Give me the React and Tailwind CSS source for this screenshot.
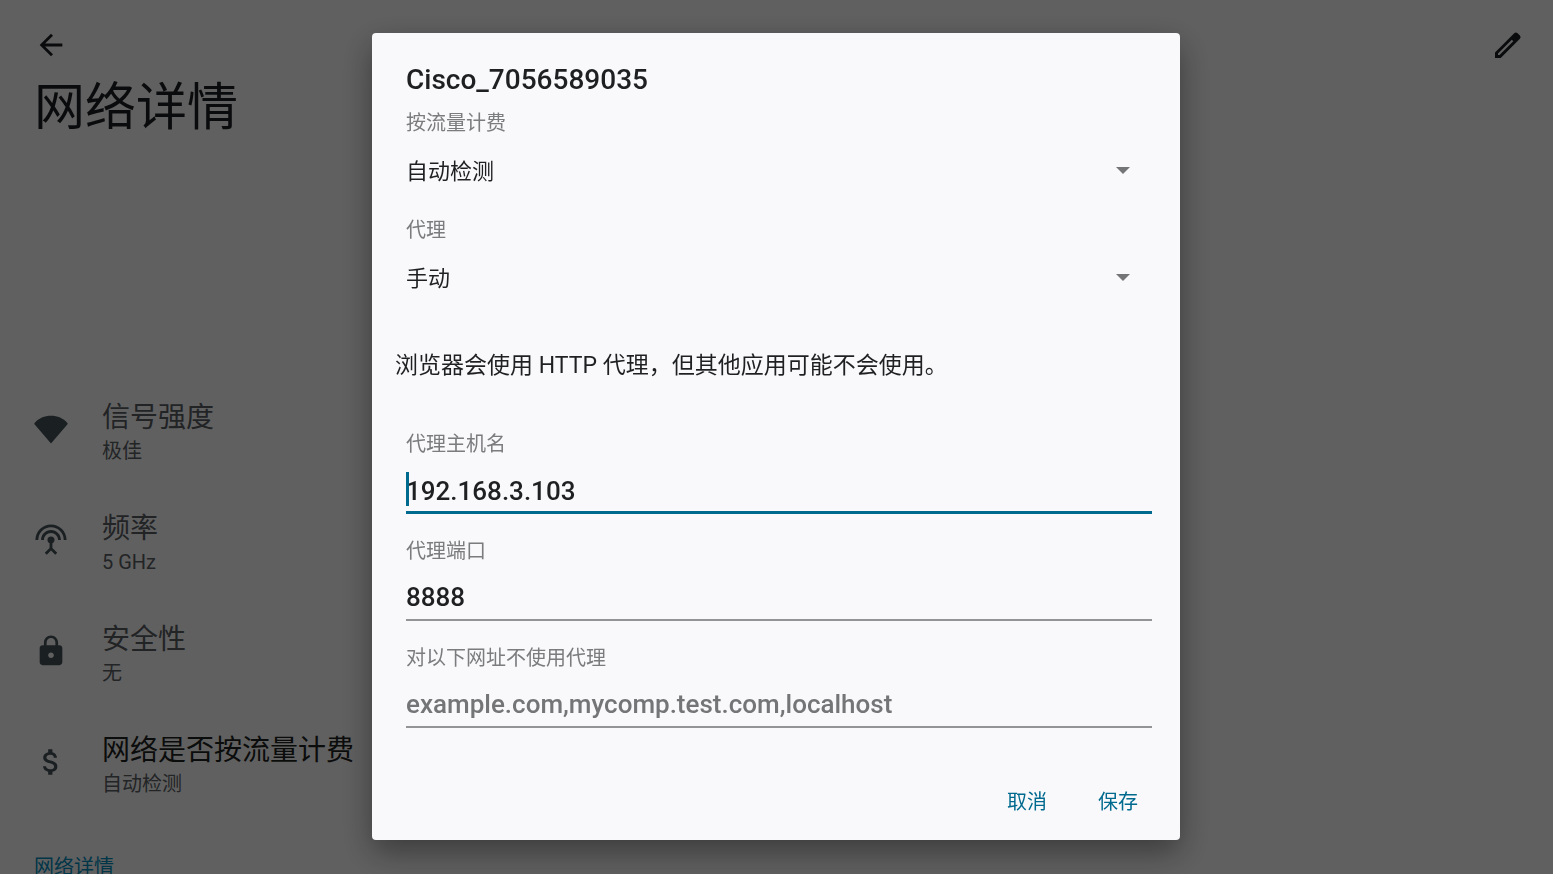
import { MdArrowBack, MdAttachMoney, MdLock, MdSettingsInputAntenna } from "react-icons/md";

const details = [
  { title: "信号强度", summary: "极佳", icon: <WifiIcon /> },
  { title: "频率", summary: "5 GHz", icon: <MdSettingsInputAntenna className="size-[34px]" /> },
  { title: "安全性", summary: "无", icon: <MdLock className="size-[34px]" /> },
  {
    title: "网络是否按流量计费",
    summary: "自动检测",
    icon: <MdAttachMoney className="size-[34px]" />,
    enabled: true,
  },
];

function WifiIcon() {
  return (
    <svg viewBox="0 0 34 34" className="size-[34px]" fill="currentColor" aria-hidden="true">
      <path d="M17 31.6 0.5 12.2Q0 11.5 0.6 10.9C4.6 6.4 10.5 3.8 17 3.8S29.4 6.4 33.4 10.9Q34 11.5 33.5 12.2Z" />
    </svg>
  );
}

function PencilIcon() {
  return (
    <svg viewBox="0 0 34 34" className="size-[34px]" fill="currentColor" aria-hidden="true">
      <path
        fillRule="evenodd"
        d="M4 30V24.4L23.2 5.2Q24.9 3.6 26.6 5.2L28.9 7.5Q30.4 9.2 28.9 10.8L9.7 30ZM7 27H8.5L22.3 13.2 20.8 11.7 7 25.5Z"
      />
    </svg>
  );
}

function SelectField({ id, label, options }) {
  return (
    <div>
      <label htmlFor={id} className="block text-xl leading-7 text-[#7b7c7e]">{label}</label>
      <div className="relative mt-2">
        <select
          id={id}
          className="block h-12 w-full appearance-none bg-transparent pt-1 text-[22px] text-[#1f2022] outline-none"
        >
          {options.map((option) => (
            <option key={option}>{option}</option>
          ))}
        </select>
        <svg
          viewBox="0 0 14 7"
          className="pointer-events-none absolute top-[22px] right-[22px] h-[7px] w-[14px] fill-[#747577]"
          aria-hidden="true"
        >
          <path d="M0 0h14L7 7z" />
        </svg>
      </div>
    </div>
  );
}

function TextField({ id, label, value, placeholder, active }) {
  return (
    <div>
      <label htmlFor={id} className="block text-xl leading-7 text-[#7b7c7e]">{label}</label>
      <div className="relative mt-2">
        <input
          type="text"
          id={id}
          name={id}
          defaultValue={value}
          placeholder={placeholder}
          className={
            "block h-12 w-full bg-transparent text-[26px] font-medium text-[#1f2022] outline-none placeholder:text-[#747577] " +
            (active ? "border-b-[3px] border-[#006a8e] pt-1" : "border-b-2 border-[#939496] pt-[2px]")
          }
        />
        {active && <span className="absolute top-[6px] left-0 h-[34px] w-[3px] bg-[#006a8e]" />}
      </div>
    </div>
  );
}

function DetailRow({ icon, title, summary, enabled }) {
  return (
    <li className="flex items-center gap-[34px]">
      <span className="shrink-0 pb-[6px] text-[#434e55]">{icon}</span>
      <div className="whitespace-nowrap">
        <p className={"text-[28px] leading-[38px] " + (enabled ? "text-[#1d1e20]" : "text-[#54595e]")}>{title}</p>
        <p className="text-xl leading-7 text-[#565b60]">{summary}</p>
      </div>
    </li>
  );
}

export default function App() {
  return (
    <div className="relative h-screen overflow-hidden bg-[#f0f0f0] font-['Roboto','Noto_Sans_CJK_SC',sans-serif] text-[#1b1d20]">
      <header className="px-[34px] pt-7">
        <div className="flex items-center justify-between">
          <button type="button" aria-label="返回">
            <MdArrowBack className="size-[34px]" />
          </button>
          <button type="button" aria-label="修改" className="-mr-[6px]">
            <PencilIcon />
          </button>
        </div>
        <h1 className="mt-[10px] text-[51px] leading-[72px]">网络详情</h1>
      </header>

      <main className="px-[34px] pt-[255px]">
        <ul className="flex flex-col gap-[45px]">
          {details.map((item) => (
            <DetailRow key={item.title} {...item} />
          ))}
        </ul>
        <h2 className="mt-[55px] text-xl leading-7 text-[#0087b5]">网络详情</h2>
      </main>

      <div className="fixed inset-0 flex items-center justify-center bg-black/60 pr-px pb-px">
        <form
          role="dialog"
          aria-labelledby="dialog-title"
          className="w-full max-w-[808px] rounded bg-[#f9f9fc] pt-[27px] pb-[14px] shadow-[0_12px_32px_rgba(0,0,0,0.4)]"
          onSubmit={(e) => e.preventDefault()}
        >
          <div className="pr-7 pl-[34px]">
            <h2 id="dialog-title" className="text-[28px] leading-10 font-medium text-[#1f2022]">
              Cisco_7056589035
            </h2>
            <div className="mt-[9px] flex flex-col gap-[23px]">
              <SelectField id="metered" label="按流量计费" options={["自动检测", "按流量计费", "不按流量计费"]} />
              <SelectField id="proxy" label="代理" options={["手动", "无", "自动配置代理"]} />
            </div>
          </div>

          <p className="mt-[50px] px-[23px] text-[23px] leading-8 text-[#1f2022]">
            浏览器会使用 HTTP 代理，但其他应用可能不会使用。
          </p>

          <div className="mt-12 flex flex-col gap-[23px] pr-7 pl-[34px]">
            <TextField id="host" label="代理主机名" value="192.168.3.103" active />
            <TextField id="port" label="代理端口" value="8888" />
            <TextField id="bypass" label="对以下网址不使用代理" placeholder="example.com,mycomp.test.com,localhost" />
          </div>

          <div className="mt-[50px] flex justify-end gap-[7px] pr-5 text-xl text-[#006a8e]">
            <button type="button" className="h-12 px-[22px]">取消</button>
            <button type="submit" className="h-12 px-[22px]">保存</button>
          </div>
        </form>
      </div>
    </div>
  );
}
